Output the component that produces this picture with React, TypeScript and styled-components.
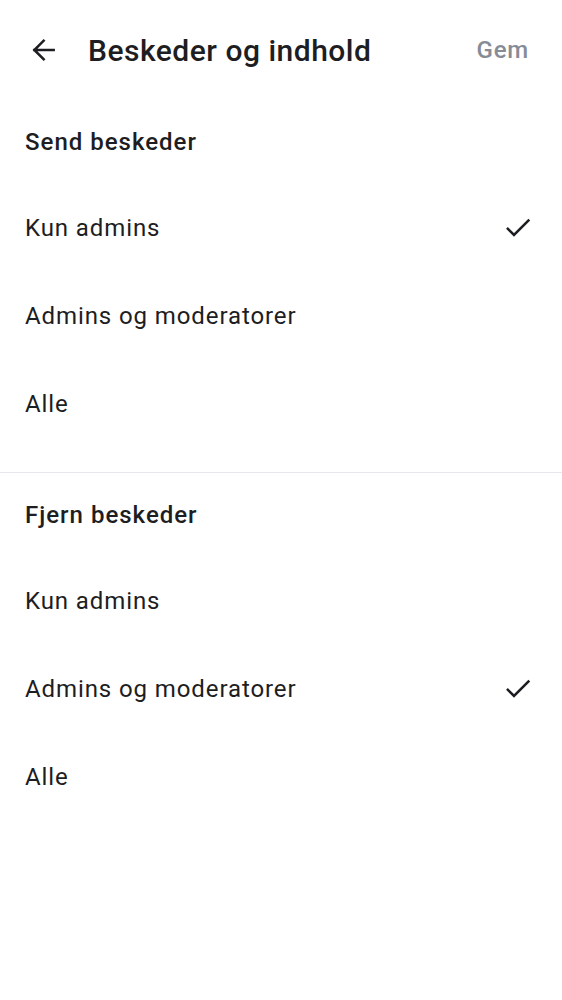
import styled, { createGlobalStyle } from 'styled-components'

const GlobalStyle = createGlobalStyle`
  body {
    margin: 0;
    background: #ffffff;
    font-family: Roboto, "Noto Sans", sans-serif;
    color: #1d1d22;
  }
`

type Option = { label: string; checked?: boolean }
type Section = { title: string; options: Option[] }

const sections: Section[] = [
  {
    title: 'Send beskeder',
    options: [
      { label: 'Kun admins', checked: true },
      { label: 'Admins og moderatorer' },
      { label: 'Alle' },
    ],
  },
  {
    title: 'Fjern beskeder',
    options: [
      { label: 'Kun admins' },
      { label: 'Admins og moderatorer', checked: true },
      { label: 'Alle' },
    ],
  },
]

function BackIcon() {
  return (
    <svg width="32" height="32" viewBox="0 0 24 24" fill="none">
      <path d="M20 12H5.5M12.5 5 5.5 12l7 7" stroke="#1d1d22" strokeWidth="1.9" strokeLinecap="square" />
    </svg>
  )
}

function CheckIcon() {
  return (
    <svg width="32" height="32" viewBox="0 0 24 24" fill="none">
      <path d="M4.4 12.6 9 17.2 19.8 6.4" stroke="#1d1d22" strokeWidth="1.9" strokeLinecap="square" />
    </svg>
  )
}

export default function App() {
  return (
    <Container>
      <GlobalStyle />
      <Header>
        <BackButton>
          <BackIcon />
        </BackButton>
        <Title>Beskeder og indhold</Title>
        <SaveButton>Gem</SaveButton>
      </Header>
      {sections.map((section, i) => (
        <Group key={section.title} $last={i === sections.length - 1}>
          <GroupTitle>{section.title}</GroupTitle>
          {section.options.map((opt) => (
            <Row key={opt.label}>
              <RowLabel>{opt.label}</RowLabel>
              {opt.checked && (
                <Check>
                  <CheckIcon />
                </Check>
              )}
            </Row>
          ))}
        </Group>
      ))}
    </Container>
  )
}

const Container = styled.div`
  width: 100%;
  min-height: 100vh;
  display: flex;
  flex-direction: column;
  background: #ffffff;
`
const Header = styled.div`
  height: 100px;
  display: flex;
  align-items: center;
  padding: 0 33px 0 27px;
  box-sizing: border-box;
`
const BackButton = styled.div`
  width: 32px;
  height: 32px;
  display: flex;
  align-items: center;
  justify-content: center;
  margin-right: 29px;
`
const Title = styled.div`
  flex: 1;
  font-size: 30px;
  font-weight: 500;
  letter-spacing: 0.5px;
  color: #1d1d22;
`
const SaveButton = styled.div`
  font-size: 24px;
  font-weight: 500;
  letter-spacing: 0.8px;
  color: #868c96;
`
const Group = styled.div<{ $last?: boolean }>`
  padding: 0 25px 24px;
  border-bottom: ${(p) => (p.$last ? 'none' : '1px solid #e8e8ec')};
`
const GroupTitle = styled.div`
  height: 84px;
  display: flex;
  align-items: center;
  font-size: 24px;
  font-weight: 500;
  letter-spacing: 1px;
  color: #1d1d22;
`
const Row = styled.div`
  height: 88px;
  display: flex;
  align-items: center;
  justify-content: space-between;
`
const RowLabel = styled.div`
  font-size: 24px;
  letter-spacing: 0.9px;
  color: #1d1d22;
`
const Check = styled.div`
  width: 32px;
  height: 32px;
  display: flex;
  align-items: center;
  justify-content: center;
  margin-right: 3px;
`
